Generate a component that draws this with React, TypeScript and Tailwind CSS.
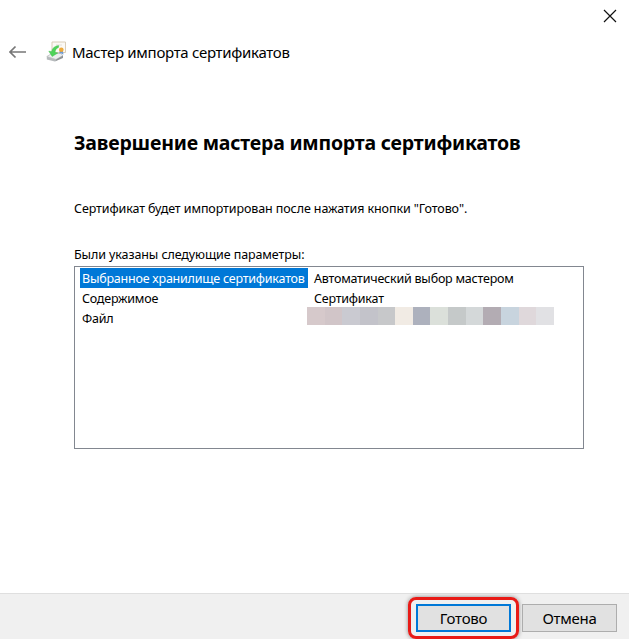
const REDACTED = [
  'bg-[#d6c9cb]',
  'bg-[#d1c5c8]',
  'bg-[#cacad1]',
  'bg-[#c3c3ca]',
  'bg-[#c7c8ca]',
  'bg-[#f1ebe4]',
  'bg-[#adb1bd]',
  'bg-[#dbe0da]',
  'bg-[#c5c9c9]',
  'bg-[#d4d8d9]',
  'bg-[#b3acb3]',
  'bg-[#c8d4de]',
  'bg-[#dfd8db]',
  'bg-[#e1e1e4]',
]

function CertificateIcon() {
  return (
    <svg className="ml-5" width="22" height="22" viewBox="0 0 22 22" fill="none">
      <path d="M6 1h13.500v10.500h-13.500z" fill="#fbf9f5" stroke="#d9cdb8" />
      <path d="M10 4h6M10 6h3" stroke="#e2ded7" />
      <path d="M13.800 9.500l-.6 4 2.100-1 2.200 1-.7-4z" fill="#6d9ad6" />
      <circle cx="15.300" cy="8.800" r="2.300" fill="#eda93a" />
      <path d="M.8 15.500l5-3h8.700l2.500 2-7 4z" fill="#eceeef" stroke="#b5b8ba" strokeWidth=".7" />
      <path d="M.8 15.500v3l8 2 1.200-2z" fill="#b6babc" />
      <path d="M10 18.500l-1.200 2 8.200-3.500v-2.500z" fill="#8f9396" />
      <path d="M12.500 4.500C8.800 5 6.200 7 5.600 10.500L2.800 10.200l3.400 5.300 5.600-3.500-2.800-.8C9.400 9 10.300 7.200 12.700 6.200z" fill="#4fd35a" stroke="#35b845" strokeWidth=".4" />
    </svg>
  )
}

function App() {
  return (
    <div className="flex h-[639px] w-[629px] flex-col overflow-hidden bg-white font-['Noto_Sans',sans-serif] text-black">
      {/* Title bar */}
      <div className="flex h-8 shrink-0 justify-end pt-[9px] pr-3">
        <svg width="14" height="14" viewBox="0 0 14 14" stroke="#111" strokeWidth="1.2">
          <path d="M1 1l12 12M13 1L1 13" />
        </svg>
      </div>

      {/* Wizard header */}
      <header className="flex h-[39px] shrink-0 items-center pl-[9px]">
        <svg width="17" height="14" viewBox="0 0 17 14" fill="none" stroke="#777" strokeWidth="1.7">
          <path d="M1 7h16M6.500 1.500L1 7l5.500 5.500" />
        </svg>
        <CertificateIcon />
        <span className="ml-1 pt-px text-[15px] tracking-[-0.3px] whitespace-nowrap">Мастер импорта сертификатов</span>
      </header>

      <main className="flex-1 pl-[74px]">
        <h1 className="mt-[58px] h-7 text-[19.5px] leading-7 font-bold tracking-[-0.2px] whitespace-nowrap">
          Завершение мастера импорта сертификатов
        </h1>
        <div className="text-[12.5px] leading-5 tracking-[-0.1px] whitespace-nowrap">
          <p className="mt-[42px]">Сертификат будет импортирован после нажатия кнопки "Готово".</p>
          <p className="mt-[26px]">Были указаны следующие параметры:</p>
          <div className="mt-px h-[183px] w-[510px] border border-[#828790] pt-px pl-[5px] leading-[22px] tracking-[-0.22px]">
            <div className="flex h-5">
              <span className="h-5 w-[228px] bg-[#0078d7] pl-0.5 text-white">Выбранное хранилище сертификатов</span>
              <span className="pl-1.5">Автоматический выбор мастером</span>
            </div>
            <div className="flex h-5">
              <span className="w-[228px] pl-0.5">Содержимое</span>
              <span className="pl-1.5">Сертификат</span>
            </div>
            <div className="flex h-5">
              <span className="w-[227px] pl-0.5">Файл</span>
              <div className="-mt-px flex h-[18px] w-[247px]">
                {REDACTED.map((color) => (
                  <span key={color} className={`flex-1 ${color}`} />
                ))}
              </div>
            </div>
          </div>
        </div>
      </main>

      {/* Buttons */}
      <footer className="flex h-[46px] shrink-0 justify-end gap-[3px] border-t border-[#dfdfdf] bg-[#f0f0f0] pt-[3px] pr-3 text-[15px] tracking-[-0.25px]">
        <div className="h-[42px] w-[111px] rounded-lg border-3 border-[#e81b17] p-[5px] pt-1 shadow-[0_0_4px_#888]">
          <button className="block h-7 w-full border-2 border-[#0078d7] bg-[#e1e1e1] leading-6">Готово</button>
        </div>
        <button className="mt-[7px] h-7 w-[95px] border border-[#adadad] bg-[#e1e1e1] leading-6">Отмена</button>
      </footer>
    </div>
  )
}

export default App
